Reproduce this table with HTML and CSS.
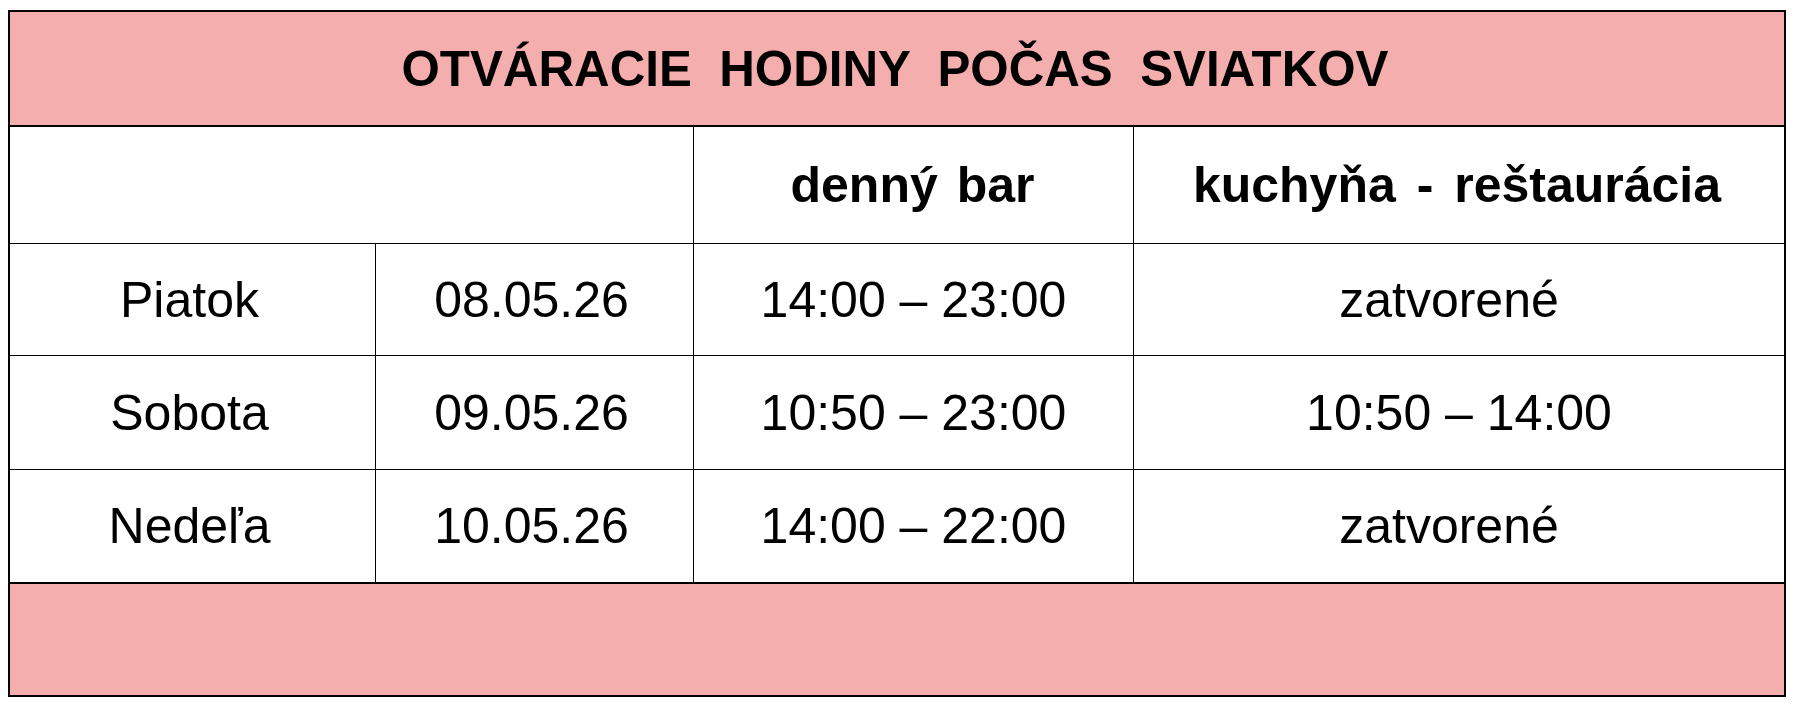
FILE: index.html
```html
<!DOCTYPE html>
<html lang="sk">
<head>
<meta charset="utf-8">
<title>Otváracie hodiny počas sviatkov</title>
<link rel="stylesheet" href="styles.css">
</head>
<body>
<div class="sheet">
  <div class="cell title span4"><span class="pre">OTVÁRACIE  HODINY  POČAS  SVIATKOV</span></div>

  <div class="cell head span2"></div>
  <div class="cell head bar">denný bar</div>
  <div class="cell head last wide">kuchyňa - reštaurácia</div>

  <div class="cell day">Piatok</div>
  <div class="cell date">08.05.26</div>
  <div class="cell">14:00 – 23:00</div>
  <div class="cell last closed">zatvorené</div>

  <div class="cell day">Sobota</div>
  <div class="cell date">09.05.26</div>
  <div class="cell">10:50 – 23:00</div>
  <div class="cell last">10:50 – 14:00</div>

  <div class="cell day lastrow">Nedeľa</div>
  <div class="cell date lastrow">10.05.26</div>
  <div class="cell lastrow">14:00 – 22:00</div>
  <div class="cell lastrow last closed">zatvorené</div>

  <div class="cell footer span4"></div>
</div>
</body>
</html>
```

FILE: styles.css
```css
html, body {
  margin: 0;
  padding: 0;
  background: #ffffff;
}

body {
  padding: 10px 8px;
  font-family: "Liberation Sans", Arial, sans-serif;
  color: #000000;
}

.sheet {
  display: grid;
  width: max-content;
  grid-template-columns: 366px 318px 440px 650px;
  grid-template-rows: 115px 117px 112px 114px 112px 113px;
  border: 2px solid #000000;
}

.cell {
  box-sizing: border-box;
  display: flex;
  align-items: center;
  justify-content: center;
  font-size: 50px;
  border-right: 1px solid #000000;
  border-bottom: 1px solid #000000;
  white-space: nowrap;
}

.cell.last {
  border-right: none;
}

.cell.lastrow {
  border-bottom: none;
}

.span2 {
  grid-column: span 2;
}

.span4 {
  grid-column: span 4;
}

.pre {
  white-space: pre;
}

.day,
.date {
  padding-right: 6px;
}

.closed {
  padding-right: 20px;
}

.title {
  background: #f4aead;
  font-size: 49.3px;
  font-weight: bold;
  border-right: none;
  border-bottom: 2px solid #000000;
  padding-right: 4px;
}

.head {
  font-weight: bold;
}

.bar {
  word-spacing: 5px;
  padding-right: 2px;
}

.wide {
  word-spacing: 7px;
  padding-right: 4px;
}

.footer {
  background: #f4aead;
  border-right: none;
  border-bottom: none;
  border-top: 2px solid #000000;
}
```
